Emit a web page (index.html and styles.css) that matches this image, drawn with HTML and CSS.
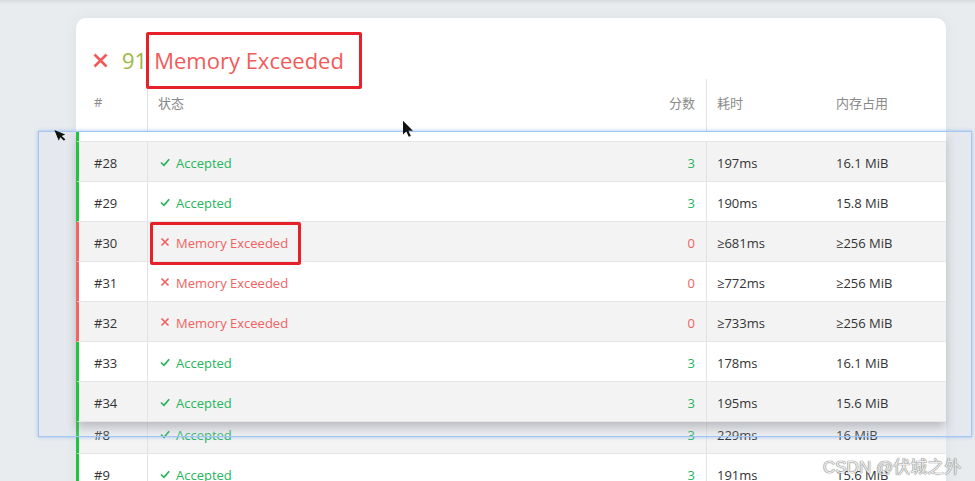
FILE: index.html
```html
<!DOCTYPE html>
<html lang="en">
<head>
    <meta charset="UTF-8">
    <meta name="viewport" content="width=device-width, initial-scale=1.0">
    <title>提交记录</title>
    <link rel="stylesheet" href="styles.css">
</head>
<body>
    <div class="top-shade"></div>

    <div class="card">
        <div class="result-title">
            <svg class="title-icon" width="15" height="15" viewBox="0 0 15 15"><path d="M1.5 1.5L13.5 13.5M13.5 1.5L1.5 13.5"/></svg>
            <span class="total">91</span>
            <span class="verdict">Memory Exceeded</span>
        </div>

        <div class="table">
            <div class="row head">
                <div class="cell num">#</div>
                <div class="cell status">状态</div>
                <div class="cell score">分数</div>
                <div class="cell time">耗时</div>
                <div class="cell mem">内存占用</div>
            </div>
            <!-- rows #1 - #7 sit under the selection box -->
            <div class="rows-under"></div>
            <div class="row ac even"><div class="cell num">#8</div><div class="cell status"><svg class="ico" viewBox="0 0 10 10"><path d="M1 5.5L4 8.3L9.2 2.2"/></svg>Accepted</div><div class="cell score">3</div><div class="cell time">229ms</div><div class="cell mem">16 MiB</div></div>
            <div class="row ac"><div class="cell num">#9</div><div class="cell status"><svg class="ico" viewBox="0 0 10 10"><path d="M1 5.5L4 8.3L9.2 2.2"/></svg>Accepted</div><div class="cell score">3</div><div class="cell time">191ms</div><div class="cell mem">15.6 MiB</div></div>
        </div>
    </div>

    <!-- selection box with the dragged rows -->
    <div class="drag-box">
        <div class="drag-rows">
            <div class="row ac sliver"></div>
            <div class="row ac even"><div class="cell num">#28</div><div class="cell status"><svg class="ico" viewBox="0 0 10 10"><path d="M1 5.5L4 8.3L9.2 2.2"/></svg>Accepted</div><div class="cell score">3</div><div class="cell time">197ms</div><div class="cell mem">16.1 MiB</div></div>
            <div class="row ac"><div class="cell num">#29</div><div class="cell status"><svg class="ico" viewBox="0 0 10 10"><path d="M1 5.5L4 8.3L9.2 2.2"/></svg>Accepted</div><div class="cell score">3</div><div class="cell time">190ms</div><div class="cell mem">15.8 MiB</div></div>
            <div class="row mle even"><div class="cell num">#30</div><div class="cell status"><svg class="ico" viewBox="0 0 10 10"><path d="M1.5 1.5L8.5 8.5M8.5 1.5L1.5 8.5"/></svg>Memory Exceeded</div><div class="cell score">0</div><div class="cell time">≥681ms</div><div class="cell mem">≥256 MiB</div></div>
            <div class="row mle"><div class="cell num">#31</div><div class="cell status"><svg class="ico" viewBox="0 0 10 10"><path d="M1.5 1.5L8.5 8.5M8.5 1.5L1.5 8.5"/></svg>Memory Exceeded</div><div class="cell score">0</div><div class="cell time">≥772ms</div><div class="cell mem">≥256 MiB</div></div>
            <div class="row mle even"><div class="cell num">#32</div><div class="cell status"><svg class="ico" viewBox="0 0 10 10"><path d="M1.5 1.5L8.5 8.5M8.5 1.5L1.5 8.5"/></svg>Memory Exceeded</div><div class="cell score">0</div><div class="cell time">≥733ms</div><div class="cell mem">≥256 MiB</div></div>
            <div class="row ac"><div class="cell num">#33</div><div class="cell status"><svg class="ico" viewBox="0 0 10 10"><path d="M1 5.5L4 8.3L9.2 2.2"/></svg>Accepted</div><div class="cell score">3</div><div class="cell time">178ms</div><div class="cell mem">16.1 MiB</div></div>
            <div class="row ac even"><div class="cell num">#34</div><div class="cell status"><svg class="ico" viewBox="0 0 10 10"><path d="M1 5.5L4 8.3L9.2 2.2"/></svg>Accepted</div><div class="cell score">3</div><div class="cell time">195ms</div><div class="cell mem">15.6 MiB</div></div>
        </div>
    </div>

    <!-- red annotation boxes -->
    <div class="mark mark-title"></div>
    <div class="mark mark-row"></div>

    <!-- mouse pointers -->
    <svg class="pointer pointer-a" width="10" height="14" viewBox="0 0 12 18"><path d="M0 0L0 15L3.6 11.6L6.3 17.5L8.6 16.5L5.9 10.8L10.8 10.8Z"/></svg>
    <svg class="pointer pointer-b" width="11" height="18" viewBox="0 0 12 18"><path d="M0 0L0 15L3.6 11.6L6.3 17.5L8.6 16.5L5.9 10.8L10.8 10.8Z"/></svg>

    <div class="watermark">CSDN @伏城之外</div>
</body>
</html>
```

FILE: styles.css
```css
body {
    font-family: "Open Sans", "Noto Sans CJK SC", sans-serif;
    font-size: 13px;
    color: #333;
    background: #e9ecef;
    margin: 0;
    padding: 0;
    height: 481px;
    overflow: hidden;
    position: relative;
}
.top-shade {
    height: 4px;
    background: linear-gradient(#d6dadd, #e9ecef);
}
.card {
    margin: 14px 0 0 76px;
    width: 870px;
    height: 500px;
    background: #fff;
    border-radius: 10px 10px 0 0;
    box-shadow: 0 0 14px rgba(0, 0, 0, 0.05);
}
.result-title {
    display: flex;
    align-items: center;
    padding: 27px 0 4px 17px;
    height: 30px;
    font-size: 22px;
}
.title-icon {
    stroke: #f25a5a;
    stroke-width: 2.6;
    fill: none;
    margin-right: 14px;
}
.total {
    color: #9db73f;
    margin-right: 7px;
}
.verdict {
    color: #f25a5a;
}

/* table rows */
.row {
    display: grid;
    grid-template-columns: 69px 469px 90px 119px 120px;
    height: 40px;
    box-sizing: border-box;
    border-left: 3px solid transparent;
    border-bottom: 1px solid #e6e6e6;
    background: #fff;
}
.row.even {
    background: #f3f3f3;
}
.row.head {
    height: 55px;
    border-bottom: 1px solid #e6e6e6;
    color: #8a8a8a;
}
.row.head .cell {
    padding-top: 0;
    padding-bottom: 8px;
}
.row.head .status {
    padding-left: 10px;
}
.rows-under {
    height: 280px;
}
.row.ac {
    border-left-color: #22c33e;
}
.row.mle {
    border-left-color: #f26565;
}
.cell {
    display: flex;
    align-items: center;
    box-sizing: border-box;
    padding-top: 2px;
    white-space: nowrap;
}
.cell.num {
    padding-left: 15px;
    border-right: 1px solid #e3e3e3;
}
.cell.status {
    padding-left: 12px;
}
.cell.score {
    justify-content: flex-end;
    padding-right: 11px;
    border-right: 1px solid #e3e3e3;
}
.cell.time,
.cell.mem {
    padding-left: 10px;
}
.ico {
    width: 10px;
    height: 10px;
    margin: -2px 6px 0 0;
    fill: none;
    stroke-width: 1.7;
}
.ac .status,
.ac .score {
    color: #26b55b;
}
.ac .ico {
    stroke: #26b55b;
}
.mle .status,
.mle .score {
    color: #f26161;
}
.mle .ico {
    stroke: #f26161;
}

/* dragged selection */
.drag-box {
    position: absolute;
    left: 38px;
    top: 131px;
    width: 934px;
    height: 306px;
    box-sizing: border-box;
    border: 1px solid #a4c6f2;
    box-shadow: 0 0 4px rgba(110, 160, 235, 0.6);
    background: rgba(205, 218, 235, 0.15);
}
.drag-rows {
    margin-left: 37px;
    width: 870px;
    box-shadow: 0 7px 9px -1px rgba(60, 70, 80, 0.28);
}
.row.sliver {
    height: 10px;
}

.mark {
    position: absolute;
    border: 3px solid #e8202a;
    border-radius: 2px;
    box-sizing: border-box;
}
.mark-title {
    left: 146px;
    top: 32px;
    width: 216px;
    height: 57px;
}
.mark-row {
    left: 150px;
    top: 222px;
    width: 151px;
    height: 43px;
}

.pointer {
    position: absolute;
    fill: #111;
}
.pointer-a {
    left: 54px;
    top: 130px;
    transform: rotate(-22deg);
    transform-origin: 0 0;
}
.pointer-b {
    left: 403px;
    top: 120px;
}

.watermark {
    position: absolute;
    left: 823px;
    top: 453px;
    font-family: "Liberation Sans", "Noto Sans CJK SC", sans-serif;
    font-size: 17px;
    color: #ececec;
    text-shadow: 0 0 1px #6f6f6f, 0 0 1px #6f6f6f;
}
```
